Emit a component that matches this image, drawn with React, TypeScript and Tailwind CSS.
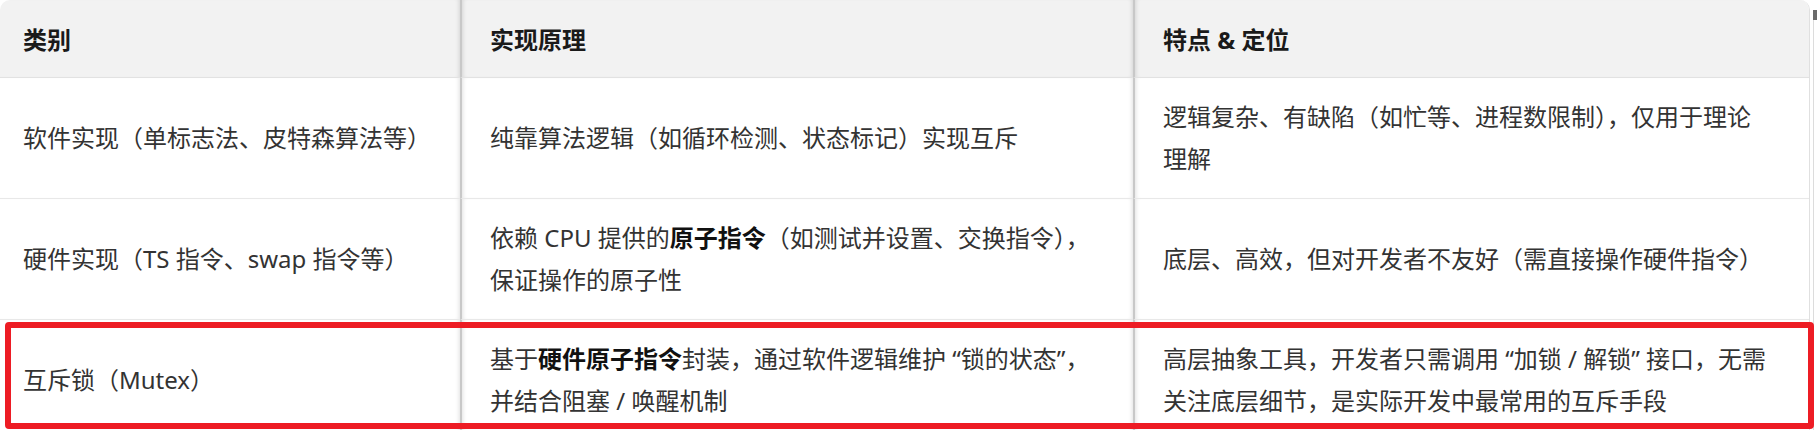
import type { ReactNode } from 'react';

type Row = {
  kind: ReactNode[];
  how: ReactNode[];
  note: ReactNode[];
};

const rows: Row[] = [
  {
    kind: ['软件实现（单标志法、皮特森算法等）'],
    how: ['纯靠算法逻辑（如循环检测、状态标记）实现互斥'],
    note: ['逻辑复杂、有缺陷（如忙等、进程数限制），仅用于理论', '理解'],
  },
  {
    kind: ['硬件实现（TS 指令、swap 指令等）'],
    how: [
      <>
        依赖 CPU 提供的<b className="font-bold text-[#111]">原子指令</b>（如测试并设置、交换指令），
      </>,
      '保证操作的原子性',
    ],
    note: ['底层、高效，但对开发者不友好（需直接操作硬件指令）'],
  },
  {
    kind: ['互斥锁（Mutex）'],
    how: [
      <>
        基于<b className="font-bold text-[#111]">硬件原子指令</b>封装，通过软件逻辑维护 “锁的状态”，
      </>,
      '并结合阻塞 / 唤醒机制',
    ],
    note: ['高层抽象工具，开发者只需调用 “加锁 / 解锁” 接口，无需', '关注底层细节，是实际开发中最常用的互斥手段'],
  },
];

// column padding + the shaded resize dividers between columns
const colCls = [
  'pl-[23px] pr-[20px] shadow-[inset_-4px_0_4px_-3px_rgba(0,0,0,0.12)]',
  'border-l-2 border-l-[#c8c8c8] pl-[28px] pr-[28px] shadow-[inset_4px_0_4px_-3px_rgba(0,0,0,0.12),inset_-4px_0_4px_-3px_rgba(0,0,0,0.12)]',
  'border-l-2 border-l-[#c8c8c8] pl-[28px] pr-[30px] shadow-[inset_4px_0_4px_-3px_rgba(0,0,0,0.12)]',
];

function HeadCell({ col, children }: { col: number; children: ReactNode }) {
  return (
    <div
      className={`flex h-[78px] items-center border-b border-b-[#e2e2e2] bg-[#f2f2f2] pt-[3px] text-[24px] font-bold text-[#1a1a1a] ${colCls[col]}`}
    >
      {children}
    </div>
  );
}

function BodyCell({ col, lines }: { col: number; lines: ReactNode[] }) {
  return (
    <div
      className={`flex flex-col justify-center border-b border-b-[#e8e8e8] bg-white py-[18px] text-[24px] leading-[42px] text-[#333] ${colCls[col]}`}
    >
      {lines.map((line, i) => (
        <span key={i} className="whitespace-nowrap">
          {line}
        </span>
      ))}
    </div>
  );
}

export default function App() {
  return (
    <div className="relative flex h-[430px] w-[1817px] overflow-hidden bg-white font-['Noto_Sans','Noto_Sans_CJK_SC',sans-serif]">
      {/* Table */}
      <div className="w-[1810px] overflow-hidden rounded-t-[10px] border-r border-r-[#e0e0e0]">
        <div className="grid grid-cols-[460px_673px_677px]">
          <HeadCell col={0}>类别</HeadCell>
          <HeadCell col={1}>实现原理</HeadCell>
          <HeadCell col={2}>特点 &amp; 定位</HeadCell>

          {rows.map((r, i) => (
            <div key={i} className="contents">
              <BodyCell col={0} lines={r.kind} />
              <BodyCell col={1} lines={r.how} />
              <BodyCell col={2} lines={r.note} />
            </div>
          ))}
        </div>
      </div>

      {/* Scrollbar */}
      <div className="ml-[3px] flex w-[4px] flex-col">
        <div className="mt-[10px] h-[10px] bg-[#6b6b6b]" />
        <div className="w-[1px] flex-1 bg-[#dcdcdc]" />
      </div>

      {/* Red highlight annotation over the last row */}
      <div className="pointer-events-none absolute left-[5px] top-[322px] h-[107px] w-[1809px] rounded-[4px] border-[6px] border-[#ed1c24]" />
    </div>
  );
}
